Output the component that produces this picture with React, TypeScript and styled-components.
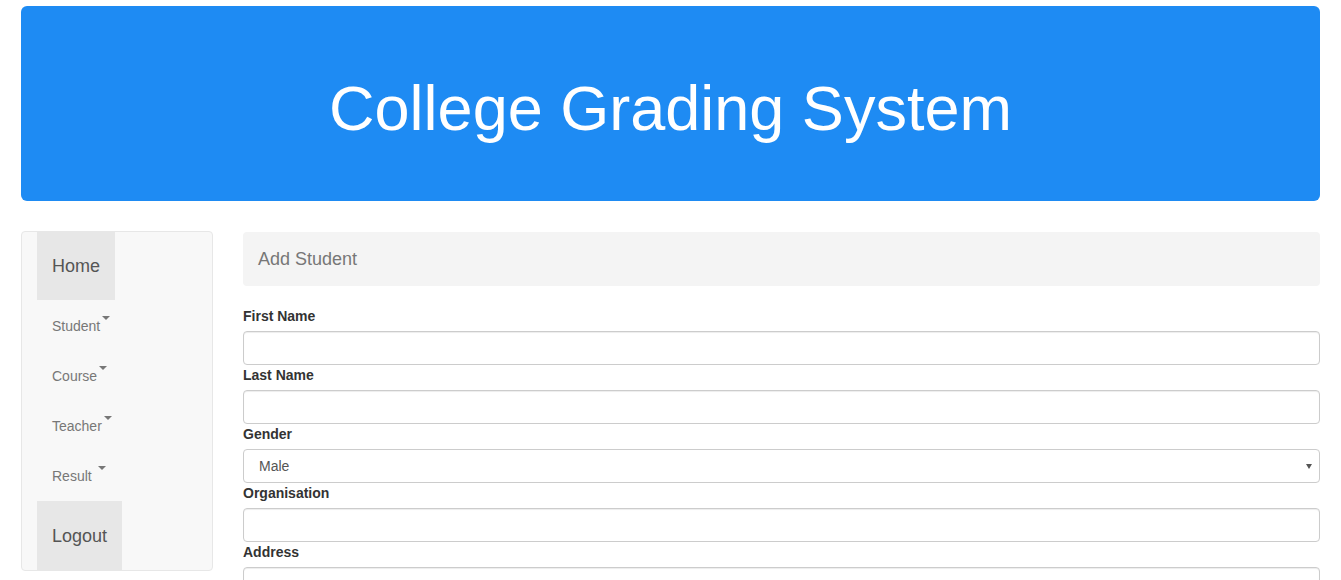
import styled, { createGlobalStyle } from 'styled-components'

const GlobalStyle = createGlobalStyle`
  * {
    box-sizing: border-box;
  }
  body {
    margin: 0;
    font-family: "Liberation Sans", Arial, sans-serif;
    font-size: 14px;
    line-height: 20px;
    color: #333;
    background: #fff;
  }
`

const Page = styled.div`
  padding: 6px 21px 0;
`

const Jumbotron = styled.header`
  height: 195px;
  background-color: #1e8bf3;
  border-radius: 6px;
  display: flex;
  align-items: center;
  justify-content: center;
`

const Title = styled.h1`
  margin: 10px 0 0;
  font-size: 63px;
  font-weight: 400;
  line-height: 1.1;
  color: #fff;
`

const Content = styled.div`
  display: flex;
  align-items: flex-start;
  gap: 30px;
  margin-top: 30px;
`

const Sidebar = styled.nav`
  width: 192px;
  flex-shrink: 0;
  background-color: #f8f8f8;
  border: 1px solid #e7e7e7;
  border-radius: 4px;
  padding: 0 15px;
`

const NavList = styled.ul`
  list-style: none;
  margin: 0;
  padding: 0;
`

const NavItem = styled.li<{ $big?: boolean }>`
  display: flex;
  align-items: center;
  height: ${p => (p.$big ? '68px' : '50px')};

  &:last-child {
    height: 69px;
    margin-top: 1px;
  }
`

const NavLink = styled.a<{ $big?: boolean }>`
  display: flex;
  align-items: center;
  height: 100%;
  padding: 0 15px;
  text-decoration: none;
  cursor: pointer;
  font-size: ${p => (p.$big ? '18px' : '14px')};
  color: ${p => (p.$big ? '#555' : '#777')};
  background-color: ${p => (p.$big ? '#e7e7e7' : 'transparent')};
  white-space: pre;
  padding-top: ${p => (p.$big ? '0' : '2px')};
`

const Caret = styled.span`
  display: inline-block;
  width: 0;
  height: 0;
  margin-left: 2px;
  margin-bottom: 16px;
  border-top: 4px solid #777;
  border-right: 4px solid transparent;
  border-left: 4px solid transparent;
`

const Main = styled.main`
  flex: 1;
  margin-top: 1px;
`

const PanelHeading = styled.div`
  height: 54px;
  display: flex;
  align-items: center;
  padding: 0 15px;
  padding-bottom: 1px;
  background-color: #f4f4f4;
  border-radius: 4px;
  font-size: 18px;
  color: #777;
  margin-bottom: 20px;
`

const Label = styled.label`
  display: block;
  font-weight: 700;
  margin-bottom: 5px;
  color: #333;
`

const Input = styled.input`
  display: block;
  width: 100%;
  height: 34px;
  padding: 6px 12px;
  font-family: inherit;
  font-size: 14px;
  color: #555;
  background: #fff;
  border: 1px solid #ccc;
  border-radius: 4px;
  box-shadow: inset 0 1px 1px rgba(0, 0, 0, 0.075);
`

const SelectWrap = styled.div`
  position: relative;
`

const Select = styled.select`
  display: block;
  width: 100%;
  height: 34px;
  padding: 6px 24px 6px 15px;
  font-family: inherit;
  font-size: 14px;
  color: #555;
  background: #fff;
  border: 1px solid #ccc;
  border-radius: 4px;
  appearance: none;
  -webkit-appearance: none;
`

const SelectArrow = styled.span`
  position: absolute;
  right: 8px;
  top: 15px;
  width: 0;
  height: 0;
  border-top: 5px solid #555;
  border-left: 3.5px solid transparent;
  border-right: 3.5px solid transparent;
  pointer-events: none;
`

const menus = ['Student', 'Course', 'Teacher', 'Result ']

export default function App() {
  return (
    <Page>
      <GlobalStyle />
      <Jumbotron>
        <Title>College Grading System</Title>
      </Jumbotron>
      <Content>
        <Sidebar>
          <NavList>
            <NavItem $big>
              <NavLink $big>Home</NavLink>
            </NavItem>
            {menus.map(m => (
              <NavItem key={m}>
                <NavLink>
                  {m}
                  <Caret />
                </NavLink>
              </NavItem>
            ))}
            <NavItem $big>
              <NavLink $big>Logout</NavLink>
            </NavItem>
          </NavList>
        </Sidebar>
        <Main>
          <PanelHeading>Add Student</PanelHeading>
          <form>
            <Label>First Name</Label>
            <Input type="text" />
            <Label>Last Name</Label>
            <Input type="text" />
            <Label>Gender</Label>
            <SelectWrap>
              <Select defaultValue="Male">
                <option>Male</option>
                <option>Female</option>
              </Select>
              <SelectArrow />
            </SelectWrap>
            <Label>Organisation</Label>
            <Input type="text" />
            <Label>Address</Label>
            <Input type="text" />
          </form>
        </Main>
      </Content>
    </Page>
  )
}
